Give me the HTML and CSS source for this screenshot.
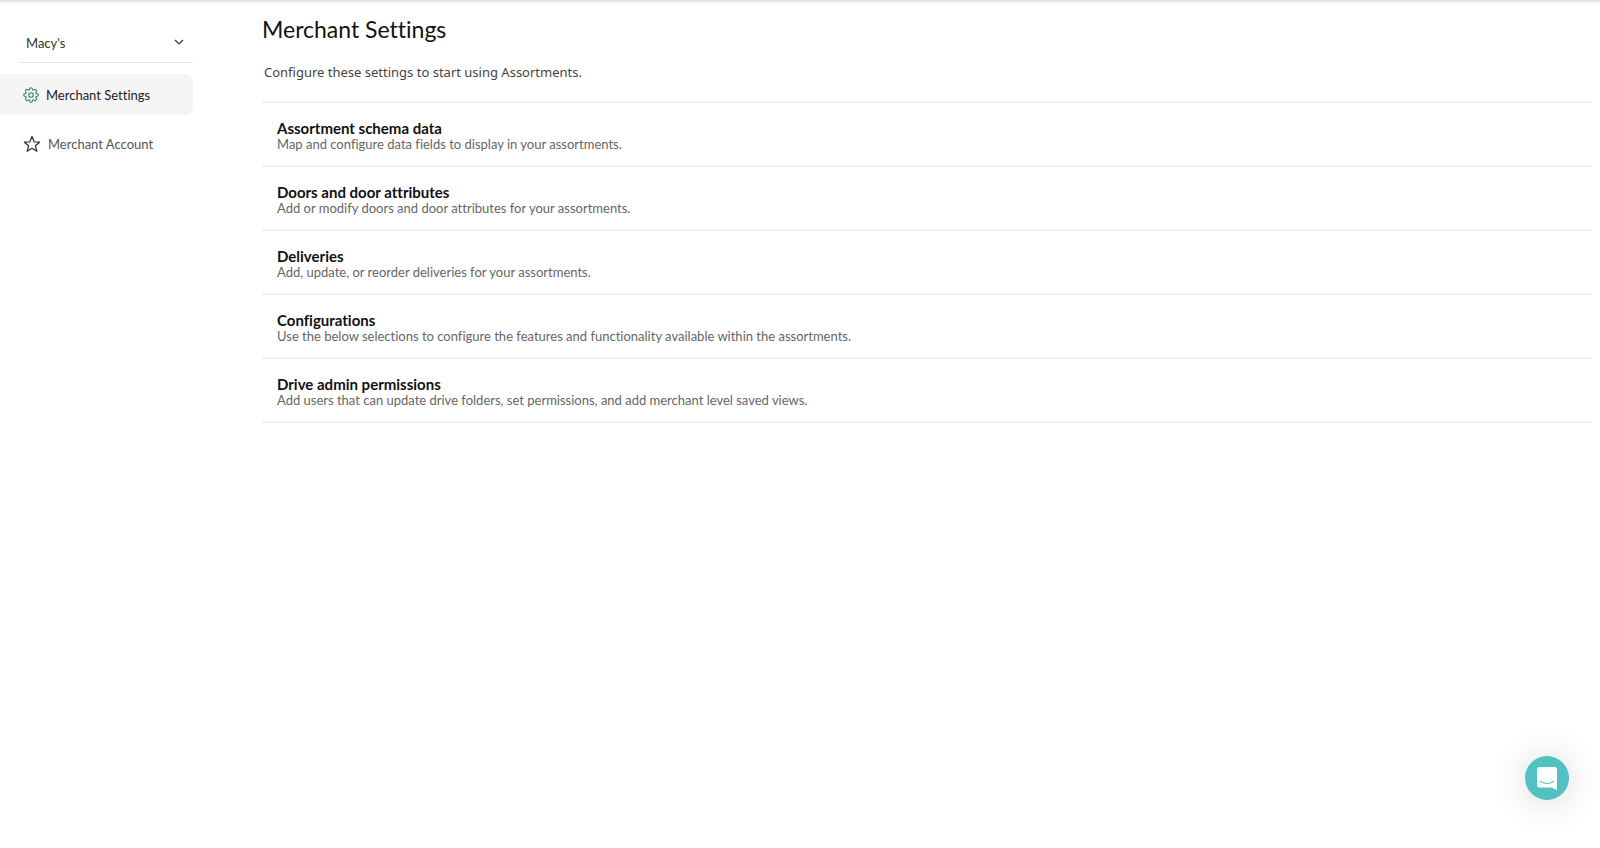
FILE: index.html
```html
<!DOCTYPE html>
<html lang="en">
<head>
    <meta charset="UTF-8">
    <meta name="viewport" content="width=device-width, initial-scale=1.0">
    <title>Merchant Settings</title>
    <link rel="stylesheet" href="styles.css">
</head>
<body>
    <div class="page">
        <aside class="sidebar">
            <div class="merchant-picker">
                <select class="merchant-select" aria-label="Merchant">
                    <option>Macy's</option>
                </select>
                <svg class="chevron" viewBox="0 0 10 6" aria-hidden="true">
                    <path d="M1 1l4 4 4-4" />
                </svg>
            </div>
            <nav class="menu">
                <a class="menu-item active" href="#">
                    <svg class="icon gear" viewBox="0 0 16 16" aria-hidden="true">
                        <path d="M6.9 1.1Q8 .3 9.1 1.1L9.5 2.8L10.5 3.2L12 2.3Q13.4 2.5 13.7 4L12.8 5.5L13.2 6.5L14.9 6.9Q15.7 8 14.9 9.1L13.2 9.5L12.8 10.5L13.7 12Q13.5 13.4 12 13.7L10.5 12.8L9.5 13.2L9.1 14.9Q8 15.7 6.9 14.9L6.5 13.2L5.5 12.8L4 13.7Q2.6 13.5 2.3 12L3.2 10.5L2.8 9.5L1.1 9.1Q.3 8 1.1 6.9L2.8 6.5L3.2 5.5L2.3 4Q2.5 2.6 4 2.3L5.5 3.2L6.5 2.8Z" />
                        <circle cx="8" cy="8" r="2.3" />
                    </svg>
                    Merchant Settings
                </a>
                <a class="menu-item" href="#">
                    <svg class="icon star" viewBox="0 0 18 18" aria-hidden="true">
                        <path d="M9 1.6L11.1 6.8L16.6 7.2L12.4 10.7L13.8 16.2L9 13.2L4.2 16.2L5.6 10.7L1.4 7.2L6.9 6.8Z" />
                    </svg>
                    Merchant Account
                </a>
            </nav>
        </aside>

        <main class="content">
            <h1>Merchant Settings</h1>
            <p class="intro">Configure these settings to start using Assortments.</p>
            <ul class="settings">
                <li>
                    <h2>Assortment schema data</h2>
                    <p>Map and configure data fields to display in your assortments.</p>
                </li>
                <li>
                    <h2>Doors and door attributes</h2>
                    <p>Add or modify doors and door attributes for your assortments.</p>
                </li>
                <li>
                    <h2>Deliveries</h2>
                    <p>Add, update, or reorder deliveries for your assortments.</p>
                </li>
                <li>
                    <h2>Configurations</h2>
                    <p>Use the below selections to configure the features and functionality available within the assortments.</p>
                </li>
                <li>
                    <h2>Drive admin permissions</h2>
                    <p>Add users that can update drive folders, set permissions, and add merchant level saved views.</p>
                </li>
            </ul>
        </main>
    </div>

    <button class="chat-button" aria-label="Open chat">
        <svg viewBox="0 0 20 24" aria-hidden="true">
            <path class="bubble" d="M2 1h16Q20 1 20 3V24L14.5 21.5H2Q0 21.5 0 19.5V3Q0 1 2 1Z" />
            <path class="smile" d="M3.5 15.5Q10 19.5 16.5 15.5" />
        </svg>
    </button>
</body>
</html>
```
FILE: styles.css
```css
body {
    margin: 0;
    font-family: Lato, "Liberation Sans", sans-serif;
    font-size: 13px;
    font-variant-ligatures: none;
    color: #222;
    background: #fff;
}
h1, h2, p, ul {
    margin: 0;
    padding: 0;
}
.page {
    display: flex;
    min-height: 100vh;
    background: linear-gradient(#dcdcdc, #f2f2f2 2px, #fff 5px);
}

/* sidebar */
.sidebar {
    width: 193px;
    flex-shrink: 0;
    padding-top: 22px;
}
.merchant-picker {
    display: flex;
    align-items: center;
    margin-left: 19px;
    border-bottom: 1px solid #e6e6e6;
}
.merchant-select {
    flex: 1;
    height: 40px;
    padding: 2px 7px 0;
    border: none;
    background: none;
    appearance: none;
    font: inherit;
    color: #333;
    cursor: pointer;
}
.chevron {
    width: 10px;
    height: 6px;
    margin-right: 9px;
    fill: none;
    stroke: #333;
    stroke-width: 1.2;
}
.menu {
    display: flex;
    flex-direction: column;
    gap: 8px;
    padding-top: 11px;
}
.menu-item {
    display: flex;
    align-items: center;
    gap: 7px;
    height: 41px;
    padding-left: 23px;
    border-radius: 0 8px 8px 0;
    color: #555;
    text-decoration: none;
}
.menu-item.active {
    background: #f5f5f5;
    color: #222;
}
.icon {
    fill: none;
    stroke-width: 1.1;
}
.gear {
    width: 16px;
    height: 16px;
    stroke: #2f8577;
}
.star {
    width: 18px;
    height: 18px;
    stroke: #333;
    stroke-width: 1.3;
    stroke-linejoin: round;
}

/* content */
.content {
    flex: 1;
    padding: 15px 8px 0 69px;
}
h1 {
    font-size: 23px;
    line-height: 28px;
    font-weight: 400;
    color: #111;
}
.intro {
    padding: 19px 2px 18px;
    font-family: "Noto Sans", sans-serif;
    font-size: 13px;
    line-height: 21px;
    color: #444;
}
.settings {
    list-style: none;
    border-top: 2px solid #f0f0f0;
}
.settings li {
    padding: 17px 15px 13px;
    border-bottom: 2px solid #f0f0f0;
}
.settings h2 {
    font-size: 15px;
    line-height: 16px;
    font-weight: 700;
    color: #111;
}
.settings p {
    line-height: 16px;
    color: #666;
}

/* chat launcher */
.chat-button {
    position: fixed;
    right: 31px;
    bottom: 48px;
    display: flex;
    align-items: center;
    justify-content: center;
    width: 44px;
    height: 44px;
    padding: 0;
    border: none;
    border-radius: 50%;
    background: #52c1c1;
    box-shadow: 0 2px 36px rgba(0, 0, 0, 0.16);
    cursor: pointer;
}
.chat-button svg {
    width: 20px;
    height: 24px;
}
.bubble {
    fill: #fff;
}
.smile {
    fill: none;
    stroke: #52c1c1;
    stroke-width: 1.2;
    stroke-linecap: round;
}
```
